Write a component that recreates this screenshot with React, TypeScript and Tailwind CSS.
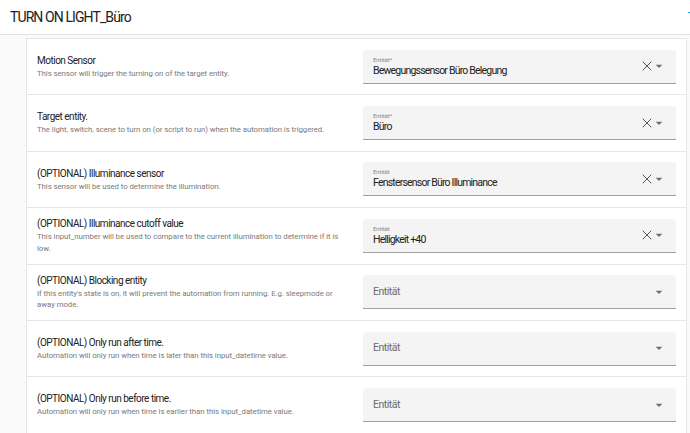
import React from 'react';
import { X } from 'lucide-react';

interface Field {
  title: string;
  desc: string;
  label: string;
  value?: string;
}

const fields: Field[] = [
  {
    title: 'Motion Sensor',
    desc: 'This sensor will trigger the turning on of the target entity.',
    label: 'Entität*',
    value: 'Bewegungssensor Büro Belegung',
  },
  {
    title: 'Target entity.',
    desc: 'The light, switch, scene to turn on (or script to run) when the automation is triggered.',
    label: 'Entität*',
    value: 'Büro',
  },
  {
    title: '(OPTIONAL) Illuminance sensor',
    desc: 'This sensor will be used to determine the illumination.',
    label: 'Entität',
    value: 'Fenstersensor Büro Illuminance',
  },
  {
    title: '(OPTIONAL) Illuminance cutoff value',
    desc: 'This input_number will be used to compare to the current illumination to determine if it is low.',
    label: 'Entität',
    value: 'Helligkeit +40',
  },
  {
    title: '(OPTIONAL) Blocking entity',
    desc: "If this entity's state is on, it will prevent the automation from running. E.g. sleepmode or away mode.",
    label: 'Entität',
  },
  {
    title: '(OPTIONAL) Only run after time.',
    desc: 'Automation will only run when time is later than this input_datetime value.',
    label: 'Entität',
  },
  {
    title: '(OPTIONAL) Only run before time.',
    desc: 'Automation will only run when time is earlier than this input_datetime value.',
    label: 'Entität',
  },
];

const MenuDown = () => (
  <svg viewBox="0 0 24 24" className="w-[16px] h-[16px]" fill="#6f6f6f">
    <path d="M7,10L12,15L17,10H7Z" />
  </svg>
);

const EntityPicker: React.FC<{ label: string; value?: string }> = ({ label, value }) => (
  <div className="w-[313px] shrink-0 h-[34px] bg-[#f4f4f4] rounded-t-[4px] border-b border-[#a0a0a0] flex items-center pl-[10px] pr-[9px]">
    {value ? (
      <div className="flex-1 flex flex-col">
        <span className="text-[6px] leading-[7px] text-[#8a8a8a] tracking-[-0.1px]">{label}</span>
        <span className="text-[10.5px] leading-[13px] text-[#212121] tracking-[-0.8px] mt-[1px]">{value}</span>
      </div>
    ) : (
      <span className="flex-1 text-[10.5px] text-[#6b6b6b] tracking-[-0.5px]">{label}</span>
    )}
    {value && <X className="w-[16px] h-[16px] text-[#555] mr-[-4px]" strokeWidth={1.5} />}
    <MenuDown />
  </div>
);

export default function App() {
  return (
    <div className="w-full h-[433px] overflow-hidden bg-[#fafafa] flex flex-col" style={{ fontFamily: 'Roboto, "Liberation Sans", sans-serif' }}>
      <div className="h-[35px] shrink-0 bg-white border-b border-[#e2e2e2] flex items-center pl-[10px] overflow-hidden">
        <span className="text-[14px] text-[#212121] tracking-[-0.9px]">TURN ON LIGHT_Büro</span>
        <span className="ml-auto mr-[-5px] text-[12px] text-[#03a9f4]">T</span>
      </div>
      <div className="flex flex-1 pt-[3px]">
        <div className="w-[27px] shrink-0 border-r border-[#e6e6e6]" />
        <div className="flex-1 bg-white border-t border-r border-[#e6e6e6]">
          {fields.map((f) => (
            <div key={f.title} className="h-[56.4px] border-b border-[#e6e6e6] flex items-center pl-[10px] pr-[10px]">
              <div className="flex-1 pr-[12px]">
                <div className="text-[10px] leading-[13px] text-[#212121] tracking-[-0.5px]">{f.title}</div>
                <div className="text-[7.8px] leading-[11.5px] text-[#7a7a7a] tracking-[-0.05px] mt-[1px] max-w-[310px]">{f.desc}</div>
              </div>
              <EntityPicker label={f.label} value={f.value} />
            </div>
          ))}
        </div>
        <div className="w-[3px] shrink-0" />
      </div>
    </div>
  );
}
